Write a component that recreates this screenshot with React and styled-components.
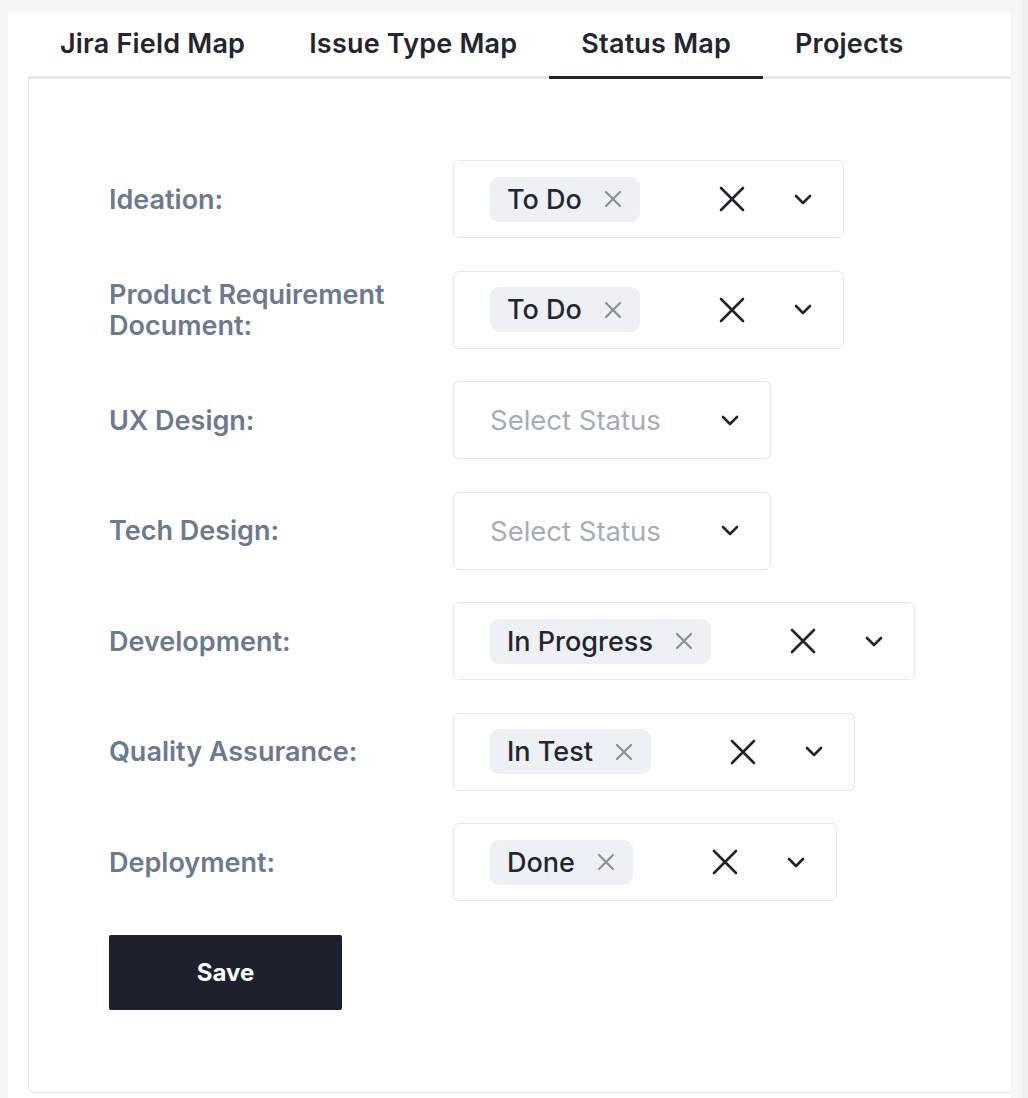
import React from "react";
import styled, { createGlobalStyle } from "styled-components";

const GlobalStyle = createGlobalStyle`
    html, body {
        margin: 0;
        padding: 0;
        background: #f6f7f8;
        font-family: Inter, "Noto Sans", "Liberation Sans", sans-serif;
    }
    * {
        box-sizing: border-box;
    }
`;

const tabs = ["Jira Field Map", "Issue Type Map", "Status Map", "Projects"];

const rows = [
    { label: "Ideation:", value: "To Do" },
    { label: "Product Requirement Document:", value: "To Do" },
    { label: "UX Design:", value: null },
    { label: "Tech Design:", value: null },
    { label: "Development:", value: "In Progress" },
    { label: "Quality Assurance:", value: "In Test" },
    { label: "Deployment:", value: "Done" },
];

const ClearIcon = () => (
    <svg width="26" height="26" viewBox="0 0 26 26">
        <path
            d="M2 2 L24 24 M24 2 L2 24"
            stroke="#1f2430"
            strokeWidth="2.6"
            strokeLinecap="round"
        />
    </svg>
);

const ChipClose = () => (
    <svg width="20" height="20" viewBox="0 0 20 20">
        <path
            d="M3 3 L17 17 M17 3 L3 17"
            stroke="#8b8f96"
            strokeWidth="2.2"
            strokeLinecap="round"
        />
    </svg>
);

const Chevron = () => (
    <svg width="18" height="11" viewBox="0 0 18 11">
        <path
            d="M2 2 L9 9 L16 2"
            fill="none"
            stroke="#1f2430"
            strokeWidth="2.6"
            strokeLinecap="round"
            strokeLinejoin="round"
        />
    </svg>
);

const StatusSelect = ({ value }) => {
    if (value) {
        return (
            <Select>
                <Chip>
                    {value}
                    <ChipClose />
                </Chip>
                <Indicator $gap={79}>
                    <ClearIcon />
                </Indicator>
                <Indicator $gap={49}>
                    <Chevron />
                </Indicator>
            </Select>
        );
    }
    return (
        <Select>
            <Placeholder>Select Status</Placeholder>
            <Indicator $gap={60}>
                <Chevron />
            </Indicator>
        </Select>
    );
};

const App = () => {
    return (
        <>
            <GlobalStyle />
            <Page>
                <Panel>
                    <TabBar>
                        {tabs.map((tab) => (
                            <Tab key={tab} $active={tab === "Status Map"}>
                                {tab}
                            </Tab>
                        ))}
                    </TabBar>
                    <Card>
                        <Form>
                            {rows.map((row) => (
                                <Row key={row.label}>
                                    <Label>{row.label}</Label>
                                    <StatusSelect value={row.value} />
                                </Row>
                            ))}
                            <SaveButton>Save</SaveButton>
                        </Form>
                    </Card>
                </Panel>
                <Scrollbar />
            </Page>
        </>
    );
};

const Page = styled.div`
    display: flex;
    height: 1098px;
    padding: 13px 0 0 8px;
    overflow: hidden;
`;

const Panel = styled.div`
    width: 1003px;
    background: #ffffff;
    padding-left: 20px;
    overflow: hidden;
`;

const Scrollbar = styled.div`
    margin-left: auto;
    width: 6px;
    margin-top: -13px;
    background: #efefef;
`;

const TabBar = styled.div`
    display: flex;
    border-bottom: 3px solid #e6e9ee;
`;

const Tab = styled.div`
    padding: 15px 32px 16px;
    font-size: 27px;
    line-height: 32px;
    font-weight: 600;
    letter-spacing: 0.2px;
    color: #23262e;
    margin-bottom: -3px;
    border-bottom: 3px solid ${(p) => (p.$active ? "#1f2430" : "transparent")};
`;

const Card = styled.div`
    width: calc(100% + 10px);
    border: 1px solid #e6e8ec;
    border-top: none;
    border-radius: 0 0 6px 6px;
    padding: 81px 0 81px 80px;
    min-height: 1014px;
`;

const Form = styled.div`
    display: flex;
    flex-direction: column;
    gap: 32.5px;
`;

const Row = styled.div`
    display: flex;
    align-items: center;
`;

const Label = styled.div`
    width: 344px;
    padding-right: 40px;
    font-size: 27px;
    line-height: 31px;
    font-weight: 600;
    color: #6b7a8f;
`;

const Select = styled.div`
    display: inline-flex;
    align-items: center;
    height: 78px;
    padding: 0 31px 0 36px;
    border: 1px solid #e3e6eb;
    border-radius: 6px;
    background: #ffffff;
`;

const Chip = styled.div`
    display: flex;
    align-items: center;
    gap: 21px;
    height: 45px;
    padding: 0 17px 0 17px;
    border-radius: 9px;
    background: #edf1f6;
    font-size: 27px;
    font-weight: 500;
    color: #23262e;
`;

const Placeholder = styled.div`
    font-size: 27.5px;
    font-weight: 400;
    color: #a3adbb;
`;

const Indicator = styled.div`
    display: flex;
    align-items: center;
    margin-left: ${(p) => p.$gap}px;
`;

const SaveButton = styled.button`
    width: 233px;
    height: 75px;
    margin-top: 1.5px;
    border: none;
    border-radius: 2px;
    background: #1c212d;
    color: #ffffff;
    font-family: Inter, "Liberation Sans", sans-serif;
    font-size: 24px;
    font-weight: 700;
    cursor: pointer;
`;

export default App;
